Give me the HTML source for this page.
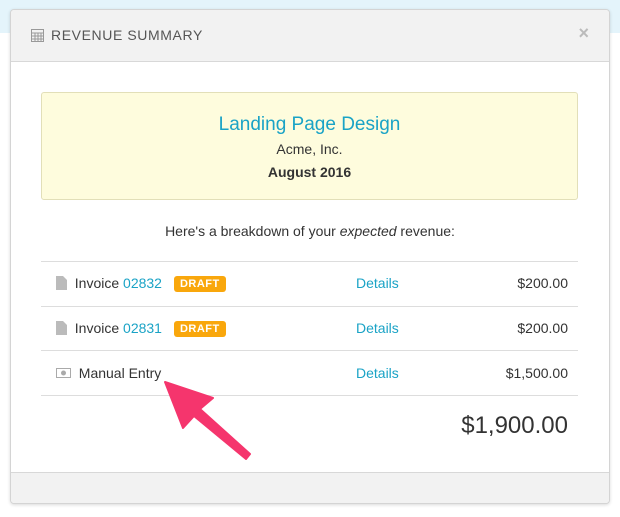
<!DOCTYPE html><html><head><style>
body{margin:0;width:620px;height:517px;background:#fff;font-family:"Liberation Sans",sans-serif;position:relative;overflow:hidden;color:#333}
.band{position:absolute;left:0;top:0;width:620px;height:33px;background:#e4f4fb}
.m{position:absolute;left:10px;top:9px;width:598px;height:493px;border:1px solid #d4d4d4;border-radius:4px;background:#fff;box-shadow:0 1px 3px rgba(0,0,0,.15);overflow:hidden}
.hd{height:51px;background:#f2f2f2;border-bottom:1px solid #d8d8d8;position:relative}
.hd span{position:absolute;left:40px;top:17px;font-size:14px;letter-spacing:.6px;color:#555}
.x{position:absolute;right:20px;top:13px;font-size:18px;color:#bbb;font-weight:bold}
.ft{position:absolute;left:0;bottom:0;width:100%;height:30px;background:#f2f2f2;border-top:1px solid #d8d8d8}
.y{position:absolute;left:30px;top:82px;width:535px;height:106px;background:#fefcdd;border:1px solid #e2dfb8;border-radius:3px;text-align:center}
a{color:#1aa3c6;text-decoration:none}
.row{position:absolute;left:30px;width:537px;height:44px;border-top:1px solid #ddd;font-size:14px}
.row div{position:absolute;top:13px}
.b{display:inline-block;background:#f9a70c;color:#fff;font-size:11px;font-weight:bold;padding:2px 6px;border-radius:3px;margin-left:12px;letter-spacing:.5px;vertical-align:1px}
</style></head><body>
<div class="band"></div>
<div class="m">
<div class="hd"><svg style="position:absolute;left:20px;top:19px" width="13" height="13"><rect x=".5" y=".5" width="12" height="12" fill="none" stroke="#999"/><path d="M1 4h11M1 7h11M1 10h11M4 4v8M7 4v8M10 4v8" stroke="#999" stroke-width="1"/></svg><span>REVENUE SUMMARY</span><div class="x">×</div></div>
<div class="y"><div style="margin-top:21px;font-size:19px;color:#1aa3c6">Landing Page Design</div><div style="margin-top:5px;font-size:14px">Acme, Inc.</div><div style="margin-top:7px;font-size:14px;font-weight:bold">August 2016</div></div>
<div style="position:absolute;top:213px;width:100%;text-align:center;font-size:14px">Here's a breakdown of your <i>expected</i> revenue:</div>
<div class="row" style="top:251px"><div style="left:15px"><svg width="11" height="14" style="vertical-align:-2px"><path d="M0 0h7l4 4v10H0z" fill="#bbb"/></svg>&nbsp; Invoice <a>02832</a><span class="b">DRAFT</span></div><div style="left:315px"><a>Details</a></div><div style="right:10px">$200.00</div></div>
<div class="row" style="top:296px"><div style="left:15px"><svg width="11" height="14" style="vertical-align:-2px"><path d="M0 0h7l4 4v10H0z" fill="#bbb"/></svg>&nbsp; Invoice <a>02831</a><span class="b">DRAFT</span></div><div style="left:315px"><a>Details</a></div><div style="right:10px">$200.00</div></div>
<div class="row" style="top:340px"><div style="left:15px;top:14px"><svg width="15" height="10" style="vertical-align:0"><rect x=".5" y=".5" width="14" height="9" fill="none" stroke="#aaa"/><circle cx="7.5" cy="5" r="2.5" fill="#aaa"/></svg>&nbsp; Manual Entry</div><div style="left:315px;top:14px"><a>Details</a></div><div style="right:10px;top:14px">$1,500.00</div></div>
<div class="row" style="top:385px;height:60px"><div style="right:10px;top:16px;font-size:24px">$1,900.00</div></div>
<div class="ft"></div>
</div>
<svg style="position:absolute;left:0;top:0" width="620" height="517"><path d="M165 382 L213 398 L200 409 L250 454 L246 459 L194 416 L183 428 Z" fill="#f5356d" stroke="#f5356d" stroke-width="2" stroke-linejoin="round"/></svg>
</body></html>
